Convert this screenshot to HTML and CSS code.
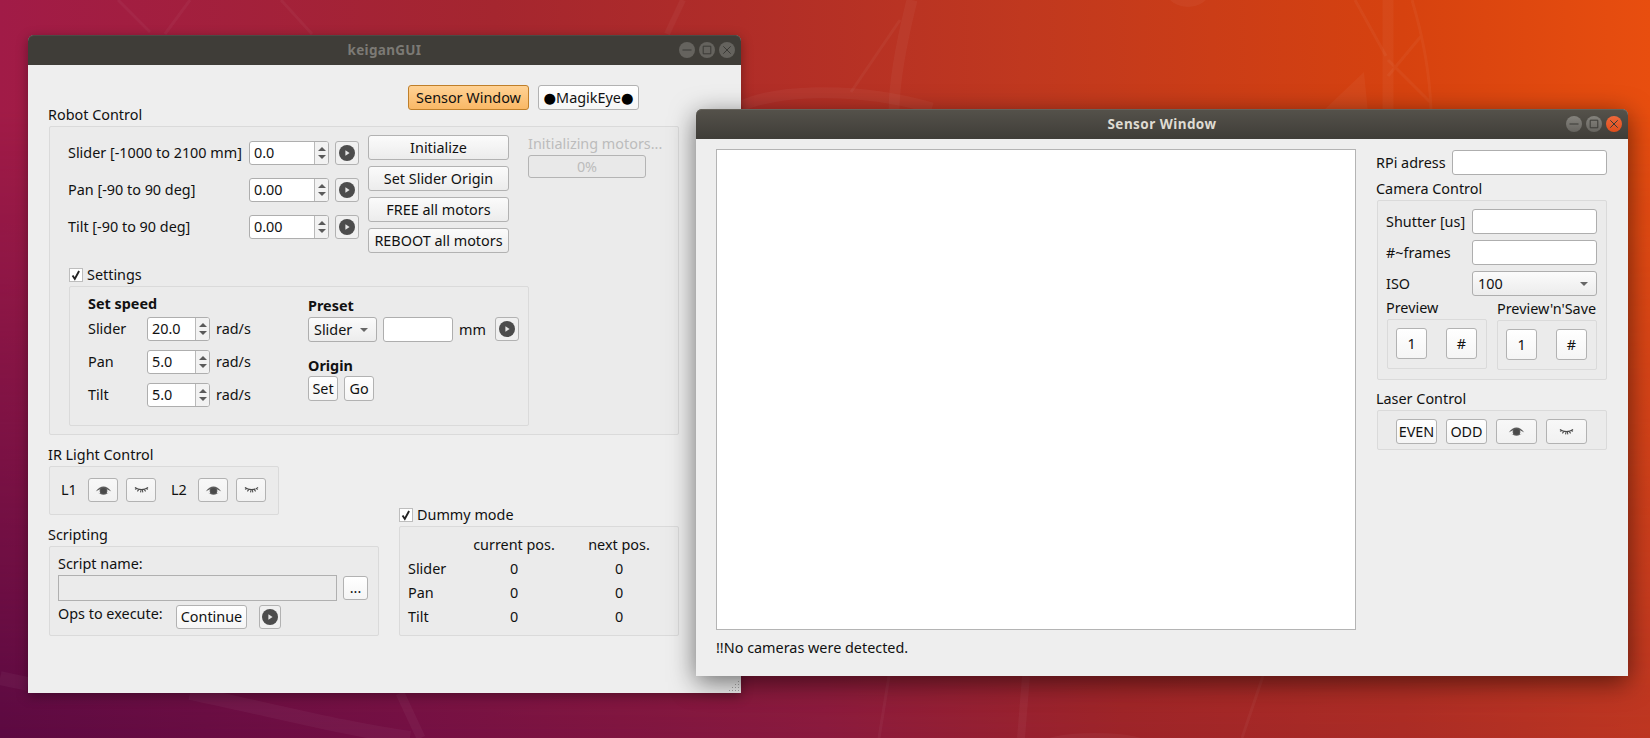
FILE: index.html
```html
<!DOCTYPE html>
<html lang="en">
<head>
<meta charset="utf-8">
<title>keiganGUI</title>
<link rel="stylesheet" href="styles.css">
</head>
<body>
<svg class="defs" width="0" height="0" aria-hidden="true">
  <symbol id="play" viewBox="0 0 16 16"><circle cx="8" cy="8" r="8" fill="#4c4c4c"/><path d="M6.4 5.2 10.6 8l-4.2 2.8z" fill="#e4e4e4"/></symbol>
  <symbol id="eye" viewBox="0 0 18 10"><path d="M.4 6.2C3 2.2 6 .6 9 .6s6 1.6 8.6 5.6C15.6 4.8 14.2 4 12.8 3.5a4.2 4.2 0 0 1-.2 4.8c1.1-.3 2-.8 2.8-1.4C13.6 8.8 11.4 9.6 9 9.6s-4.6-.8-6.4-2.7c.8.6 1.7 1.1 2.8 1.4a4.2 4.2 0 0 1-.2-4.8C3.8 4 2.4 4.8.4 6.2z" fill="#5c5c5c"/><circle cx="9" cy="5.4" r="3.2" fill="#4a4a4a"/></symbol>
  <symbol id="closed" viewBox="0 0 16 8"><path d="M1 1.2C5 4.4 11 4.4 15 1.2M1 3.2 3.4 2.4M3.6 5.4 5.2 3.4M7 6.6 7.4 4.2M9.4 6.6 9 4.2M12.4 5.4 10.8 3.4M15 3.2 12.6 2.4" fill="none" stroke="#4a4a4a" stroke-width="1.15"/></symbol>
  <symbol id="check" viewBox="0 0 14 14"><path d="M3 7.6 5.6 11.6 10.6 2.4" fill="none" stroke="#222" stroke-width="2.2"/></symbol>
</svg>

<main class="desktop">
  <div class="paper-top"></div>
  <svg class="paper-art" viewBox="0 0 1650 738" aria-hidden="true">
    <g fill="none" stroke="#fff" stroke-opacity=".04">
      <path d="M912 0C902 40 894 80 894 112" stroke-width="11"/>
      <path d="M900 20 851 92" stroke-width="3"/>
      <path d="M1388 0V112" stroke-width="11"/>
      <path d="M1355 0 1386 56M1412 0C1424 40 1430 80 1431 110M1422 35 1388 76M1388 60 1430 102" stroke-width="3"/>
      <path d="M742 106C770 92 850 84 932 108" stroke-width="11"/>
      <path d="M190 0 165 34M118 0 150 32M281 0 312 34" stroke-width="3"/>
      <path d="M683 0 667 34" stroke-width="6"/>
      <path d="M190 693C280 712 350 730 410 738M0 678 28 684" stroke-width="14"/>
      <path d="M400 693 421 738" stroke-width="9"/>
      <path d="M1026 676 1021 738" stroke-width="8"/>
      <path d="M889 676 879 738M1263 676 1242 738" stroke-width="3"/>
    </g>
    <g fill="#fff" fill-opacity=".04">
      <ellipse cx="1188" cy="-8" rx="21" ry="15"/>
      <ellipse cx="1095" cy="744" rx="55" ry="11"/>
      <path d="M1364 72 1368 112H1322z"/>
    </g>
  </svg>

  <section class="window win-main">
    <header class="titlebar">
      <span></span>
      <h1 class="title">keiganGUI</h1>
      <div class="controls">
        <span class="ctl"><svg viewBox="0 0 16 16"><path d="M3.5 8h9"/></svg></span>
        <span class="ctl"><svg viewBox="0 0 16 16"><path d="M4.2 4.2h7.6v7.6H4.2z"/></svg></span>
        <span class="ctl"><svg viewBox="0 0 16 16"><path d="m4.3 4.3 7.4 7.4m0-7.4-7.4 7.4"/></svg></span>
      </div>
    </header>
    <div class="main-body">
      <div class="main-head">
        <span class="head-label">Robot Control</span>
        <div class="head-btns">
          <button class="btn btn-sensor">Sensor Window</button>
          <button class="btn btn-flat btn-magik"><span class="dot">●</span>MagikEye<span class="dot">●</span></button>
        </div>
      </div>

      <div class="group robot">
        <div class="robot-top">
          <div class="motors">
            <div class="motor-row">
              <span class="motor-label">Slider [-1000 to 2100 mm]</span>
              <div class="spin spin-motor"><span class="spin-val">0.0</span><span class="spin-arrows"><i class="up"></i><i class="down"></i></span></div>
              <button class="btn btn-icon"><svg class="ic-play"><use href="#play"/></svg></button>
            </div>
            <div class="motor-row">
              <span class="motor-label">Pan [-90 to 90 deg]</span>
              <div class="spin spin-motor"><span class="spin-val">0.00</span><span class="spin-arrows"><i class="up"></i><i class="down"></i></span></div>
              <button class="btn btn-icon"><svg class="ic-play"><use href="#play"/></svg></button>
            </div>
            <div class="motor-row">
              <span class="motor-label">Tilt [-90 to 90 deg]</span>
              <div class="spin spin-motor"><span class="spin-val">0.00</span><span class="spin-arrows"><i class="up"></i><i class="down"></i></span></div>
              <button class="btn btn-icon"><svg class="ic-play"><use href="#play"/></svg></button>
            </div>
          </div>
          <div class="action-col">
            <button class="btn">Initialize</button>
            <button class="btn">Set Slider Origin</button>
            <button class="btn">FREE all motors</button>
            <button class="btn">REBOOT all motors</button>
          </div>
          <div class="progress-col">
            <span class="disabled-text">Initializing motors...</span>
            <div class="progress">0%</div>
          </div>
        </div>

        <label class="check-row settings-check"><span class="check"><svg><use href="#check"/></svg></span>Settings</label>
        <div class="group settings">
          <div class="speed-col">
            <div class="bold-line">Set speed</div>
            <div class="speed-rows">
              <div class="speed-row"><span class="speed-label">Slider</span><div class="spin spin-speed"><span class="spin-val">20.0</span><span class="spin-arrows"><i class="up"></i><i class="down"></i></span></div><span>rad/s</span></div>
              <div class="speed-row"><span class="speed-label">Pan</span><div class="spin spin-speed"><span class="spin-val">5.0</span><span class="spin-arrows"><i class="up"></i><i class="down"></i></span></div><span>rad/s</span></div>
              <div class="speed-row"><span class="speed-label">Tilt</span><div class="spin spin-speed"><span class="spin-val">5.0</span><span class="spin-arrows"><i class="up"></i><i class="down"></i></span></div><span>rad/s</span></div>
            </div>
          </div>
          <div class="preset-col">
            <div class="bold-line">Preset</div>
            <div class="preset-row">
              <div class="combo combo-preset"><span>Slider</span><i class="combo-arrow"></i></div>
              <div class="field field-preset"></div>
              <span class="mm">mm</span>
              <button class="btn btn-icon"><svg class="ic-play"><use href="#play"/></svg></button>
            </div>
            <div class="bold-line origin-title">Origin</div>
            <div class="origin-row">
              <button class="btn btn-flat btn-origin">Set</button>
              <button class="btn btn-flat btn-origin">Go</button>
            </div>
          </div>
        </div>
      </div>

      <div class="main-bottom">
        <div class="bottom-left">
          <div class="section-label">IR Light Control</div>
          <div class="group ir">
            <span class="ir-label">L1</span>
            <button class="btn btn-eye"><svg class="ic-eye"><use href="#eye"/></svg></button>
            <button class="btn btn-eye"><svg class="ic-closed"><use href="#closed"/></svg></button>
            <span class="ir-label ir-label-2">L2</span>
            <button class="btn btn-eye"><svg class="ic-eye"><use href="#eye"/></svg></button>
            <button class="btn btn-eye"><svg class="ic-closed"><use href="#closed"/></svg></button>
          </div>
          <div class="section-label scripting-label">Scripting</div>
          <div class="group scripting">
            <div class="script-name">Script name:</div>
            <div class="script-row">
              <div class="script-input"></div>
              <button class="btn btn-flat btn-dots">...</button>
            </div>
            <div class="ops-row">
              <span class="ops-label">Ops to execute:</span>
              <button class="btn btn-flat btn-continue">Continue</button>
              <button class="btn btn-icon btn-icon-narrow"><svg class="ic-play"><use href="#play"/></svg></button>
            </div>
          </div>
        </div>
        <div class="bottom-right">
          <label class="check-row"><span class="check"><svg><use href="#check"/></svg></span>Dummy mode</label>
          <div class="group dummy">
            <span></span><span class="cell">current pos.</span><span class="cell">next pos.</span>
            <span>Slider</span><span class="cell">0</span><span class="cell">0</span>
            <span>Pan</span><span class="cell">0</span><span class="cell">0</span>
            <span>Tilt</span><span class="cell">0</span><span class="cell">0</span>
          </div>
        </div>
      </div>
    </div>
    <svg class="grip" viewBox="0 0 11 10" aria-hidden="true"><path d="M9 0h1v1H9zM6 3h1v1H6zM9 3h1v1H9zM3 6h1v1H3zM6 6h1v1H6zM9 6h1v1H9zM0 9h1v1H0zM3 9h1v1H3zM6 9h1v1H6zM9 9h1v1H9z" fill="#a9a9a9"/></svg>
  </section>

  <section class="window win-sensor">
    <header class="titlebar titlebar-focus">
      <span></span>
      <h1 class="title">Sensor Window</h1>
      <div class="controls">
        <span class="ctl"><svg viewBox="0 0 16 16"><path d="M3.5 8h9"/></svg></span>
        <span class="ctl"><svg viewBox="0 0 16 16"><path d="M4.2 4.2h7.6v7.6H4.2z"/></svg></span>
        <span class="ctl ctl-close"><svg viewBox="0 0 16 16"><path d="m4.3 4.3 7.4 7.4m0-7.4-7.4 7.4"/></svg></span>
      </div>
    </header>
    <div class="sensor-body">
      <div class="view-col">
        <div class="canvas"></div>
        <div class="status">!!No cameras were detected.</div>
      </div>
      <div class="side-col">
        <div class="rpi-row"><span class="rpi-label">RPi adress</span><div class="field field-rpi"></div></div>
        <div class="section-label side-label">Camera Control</div>
        <div class="group camera">
          <div class="cam-row"><span class="cam-label">Shutter [us]</span><div class="field field-cam"></div></div>
          <div class="cam-row"><span class="cam-label">#~frames</span><div class="field field-cam"></div></div>
          <div class="cam-row"><span class="cam-label">ISO</span><div class="combo combo-iso"><span>100</span><i class="combo-arrow"></i></div></div>
          <div class="preview-cols">
            <div class="preview-col">
              <div class="preview-title">Preview</div>
              <div class="group preview-box"><button class="btn btn-flat btn-square">1</button><button class="btn btn-flat btn-square">#</button></div>
            </div>
            <div class="preview-col preview-col-save">
              <div class="preview-title save-title">Preview'n'Save</div>
              <div class="group preview-box save-box"><button class="btn btn-flat btn-square">1</button><button class="btn btn-flat btn-square">#</button></div>
            </div>
          </div>
        </div>
        <div class="section-label side-label laser-label">Laser Control</div>
        <div class="group laser">
          <button class="btn btn-flat btn-laser">EVEN</button>
          <button class="btn btn-flat btn-laser">ODD</button>
          <button class="btn btn-eye btn-laser"><svg class="ic-eye"><use href="#eye"/></svg></button>
          <button class="btn btn-eye btn-laser"><svg class="ic-closed"><use href="#closed"/></svg></button>
        </div>
      </div>
    </div>
  </section>
</main>
</body>
</html>
```
FILE: styles.css
```css
* { box-sizing: border-box; }
html, body { margin: 0; height: 100%; overflow: hidden; }
body { font: 14.4px/18px "Noto Sans", "Open Sans", sans-serif; color: #111; }
.defs { position: absolute; }

.desktop {
  position: relative;
  width: 1650px;
  height: 738px;
  overflow: hidden;
  background: linear-gradient(to right, #5c0a42 0%, #741044 25%, #8a1a3e 50%, #9d2429 68%, #ab2c26 85%, #bd3622 100%);
}
.paper-top {
  position: absolute;
  inset: 0;
  background: linear-gradient(to right, #a11b47 0%, #a5262f 30%, #b02d28 45%, #c0381f 62%, #d6420f 85%, #e84e0f 100%);
  -webkit-mask-image: linear-gradient(to bottom, #000 0%, #000 15%, transparent 100%);
  mask-image: linear-gradient(to bottom, #000 0%, #000 15%, transparent 100%);
}
.paper-art { position: absolute; inset: 0; width: 1650px; height: 738px; }

.window {
  position: absolute;
  display: flex;
  flex-direction: column;
  background: #eeeeee;
  border-radius: 6px 6px 0 0;
}
.win-main { left: 28px; top: 35px; width: 713px; height: 658px; box-shadow: 0 3px 12px rgba(0,0,0,.35); }
.win-sensor { left: 696px; top: 109px; width: 932px; height: 567px; box-shadow: 0 6px 26px rgba(0,0,0,.55); }

.titlebar {
  flex: none;
  display: grid;
  grid-template-columns: 1fr auto 1fr;
  align-items: center;
  height: 30px;
  padding: 0 6px;
  background: #3f3d38;
  border-radius: 6px 6px 0 0;
  box-shadow: inset 0 1px 0 #4c4a45;
}
.titlebar-focus { background: linear-gradient(#55524b, #3f3d38); box-shadow: inset 0 1px 0 #65625b; }
.title { margin: 0; font-size: 13.5px; font-weight: 700; line-height: 18px; color: #7c7a75; letter-spacing: .3px; }
.titlebar-focus .title { color: #dfdbd2; letter-spacing: .45px; }
.controls { display: flex; justify-content: flex-end; gap: 4px; }
.ctl { width: 16px; height: 16px; border-radius: 50%; background: #65635e; }
.titlebar-focus .ctl { background: linear-gradient(#85837d, #66645f); }
.titlebar-focus .ctl-close { background: linear-gradient(#f0683a, #df4e1c); }
.ctl svg { display: block; width: 16px; height: 16px; fill: none; stroke: #3b3a36; stroke-width: 1; }

.btn {
  display: flex;
  align-items: center;
  justify-content: center;
  height: 25px;
  margin: 0;
  padding: 0;
  font: inherit;
  color: #111;
  white-space: nowrap;
  background: linear-gradient(#fbfbfb, #ececec);
  border: 1px solid #b2b2b2;
  border-radius: 3px;
}
.btn-flat { background: linear-gradient(#fff, #f5f5f5); }
.btn-sensor { width: 121px; background: linear-gradient(#ffd294, #f9b866); border-color: #bf7f2a; }
.btn-magik { width: 101px; }
.dot { font-family: "DejaVu Sans", sans-serif; color: #000; }
.btn-icon { width: 24px; height: 24px; background: #f0f0f0; }
.btn-icon-narrow { width: 22px; }
.ic-play { display: block; width: 16px; height: 16px; }
.btn-eye { width: 30px; height: 24px; background: linear-gradient(#f8f8f8, #f1f1f1); }
.ic-eye { display: block; width: 17px; height: 9px; }
.ic-closed { display: block; width: 15px; height: 8px; }

.field { height: 25px; background: #fff; border: 1px solid #aeaeae; border-radius: 3px; }
.spin { display: flex; height: 24px; background: #fff; border: 1px solid #aeaeae; border-radius: 3px; }
.spin-val { flex: 1; padding-left: 4px; line-height: 22px; }
.spin-arrows { flex: none; width: 14px; display: flex; flex-direction: column; align-items: center; justify-content: center; gap: 4px; background: #f2f2f2; border-left: 1px solid #b9b9b9; border-radius: 0 2px 2px 0; }
.spin-arrows i { width: 0; height: 0; border-left: 4px solid transparent; border-right: 4px solid transparent; }
.spin-arrows .up { border-bottom: 4px solid #5a5a5a; }
.spin-arrows .down { border-top: 4px solid #5a5a5a; }
.spin-motor { width: 80px; }
.spin-speed { width: 63px; }

.combo { display: flex; align-items: center; justify-content: space-between; height: 25px; padding: 0 8px 0 5px; background: linear-gradient(#fbfbfb, #ececec); border: 1px solid #aeaeae; border-radius: 3px; }
.combo-arrow { width: 0; height: 0; border-left: 4px solid transparent; border-right: 4px solid transparent; border-top: 4px solid #666; }
.combo-preset { width: 69px; }
.combo-iso { width: 125px; }

.group { background: #ebebeb; border: 1px solid #dadada; border-radius: 2px; }
.section-label, .head-label { line-height: 22px; }

.main-body { flex: 1; display: flex; flex-direction: column; padding-left: 20px; }
.main-head { display: flex; justify-content: space-between; height: 41px; margin-top: 20px; padding-right: 102px; }
.head-label { align-self: flex-end; }
.head-btns { display: flex; gap: 9px; }

.robot { width: 630px; height: 309px; margin-left: 1px; padding: 8px 0 0 18px; }
.robot-top { display: flex; }
.motors { width: 291px; margin: 6px 9px 0 0; display: flex; flex-direction: column; gap: 13px; }
.motor-row { display: flex; align-items: center; }
.motor-label { width: 181px; white-space: nowrap; }
.motor-row .btn-icon { margin-left: 6px; }
.action-col { width: 141px; display: flex; flex-direction: column; gap: 6px; }
.progress-col { width: 118px; margin-left: 19px; display: flex; flex-direction: column; gap: 2px; }
.disabled-text { color: #bcbcbc; white-space: nowrap; }
.progress { height: 23px; line-height: 21px; text-align: center; color: #bcbcbc; background: #e9e9e9; border: 1px solid #b4b4b4; border-radius: 3px; }

.check-row { display: flex; align-items: center; gap: 4px; height: 18px; }
.check { flex: none; width: 14px; height: 14px; background: #fff; border: 1px solid #bdbdbd; }
.check svg { display: block; width: 12px; height: 12px; }
.settings-check { margin: 13px 0 2px 1px; }

.settings { display: flex; width: 460px; height: 140px; margin-left: 1px; padding: 8px 0 0 18px; }
.bold-line { font-weight: 700; }
.speed-col { width: 220px; }
.speed-rows { display: flex; flex-direction: column; gap: 9px; margin-top: 4px; }
.speed-row { display: flex; align-items: center; gap: 6px; height: 24px; }
.speed-label { width: 53px; }
.preset-col { margin-top: 2px; }
.preset-row { display: flex; align-items: flex-start; gap: 6px; margin-top: 2px; }
.field-preset { width: 70px; }
.mm { width: 30px; line-height: 25px; }
.origin-title { margin-top: 15px; }
.origin-row { display: flex; gap: 6px; margin-top: 1px; }
.btn-origin { width: 30px; }

.main-bottom { display: flex; }
.bottom-left { width: 351px; margin-top: 9px; }
.bottom-right { margin-top: 71px; }
.ir { display: flex; align-items: center; width: 230px; height: 49px; margin-left: 1px; padding: 0 0 1px 11px; }
.ir-label { width: 27px; }
.ir .btn-eye + .btn-eye { margin-left: 8px; }
.ir-label-2 { margin-left: 15px; }
.scripting-label { margin-top: 9px; }
.scripting { width: 330px; height: 90px; margin-left: 1px; padding: 8px 0 0 8px; }
.script-row { display: flex; align-items: center; gap: 6px; margin-top: 2px; }
.script-input { width: 279px; height: 26px; background: #ebebeb; border: 1px solid #b0b0b0; }
.btn-dots { width: 25px; height: 24px; }
.ops-row { display: flex; align-items: flex-start; margin-top: 4px; }
.ops-label { width: 118px; white-space: nowrap; }
.btn-continue { width: 71px; height: 24px; margin-right: 12px; }

.dummy { display: grid; grid-template-columns: 46px 120px 90px; grid-auto-rows: 24px; align-items: center; width: 280px; height: 110px; margin-top: 2px; padding: 6px 0 0 8px; }
.cell { text-align: center; white-space: nowrap; }

.grip { position: absolute; right: 1px; bottom: 2px; width: 11px; height: 10px; }

.sensor-body { flex: 1; display: flex; padding-left: 20px; }
.view-col { width: 640px; padding-top: 10px; }
.canvas { height: 481px; background: #fff; border: 1px solid #b4b4b4; }
.status { margin-top: 9px; }
.side-col { width: 231px; margin-left: 20px; padding-top: 11px; }
.rpi-row { display: flex; align-items: center; }
.rpi-label { width: 76px; white-space: nowrap; }
.field-rpi { width: 155px; }
.side-label { margin-top: 3px; }
.camera { width: 230px; height: 180px; margin-left: 1px; padding: 8px 0 0 8px; }
.cam-row { display: flex; align-items: center; margin-bottom: 6px; }
.cam-label { width: 86px; white-space: nowrap; }
.field-cam { width: 125px; }
.preview-cols { display: flex; gap: 10px; margin-top: -3px; }
.preview-title { white-space: nowrap; }
.preview-col-save { margin-top: 1px; }
.preview-box { display: flex; gap: 19px; width: 100px; height: 50px; margin: 2px 0 0 1px; padding: 8px 0 0 8px; }
.save-box { margin-left: 0; }
.btn-square { width: 31px; height: 31px; }
.laser-label { margin-top: 8px; }
.laser { display: flex; gap: 9px; width: 230px; height: 40px; margin-left: 1px; padding: 8px 0 0 18px; }
.btn-laser { width: 41px; height: 25px; }
```
